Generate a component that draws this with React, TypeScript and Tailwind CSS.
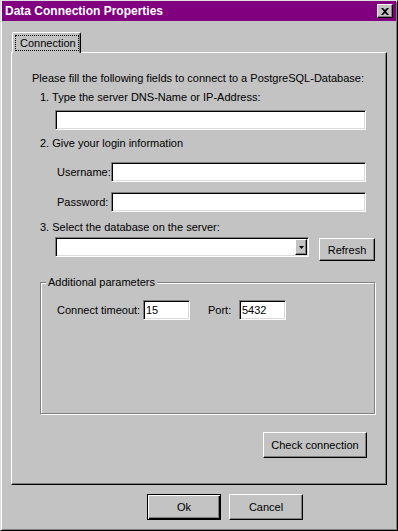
import React from 'react';

// Win9x style bevels
const raised = "bg-[#c3c3c3] border border-t-white border-l-white border-r-black border-b-black shadow-[inset_-1px_-1px_0_#808080]";
const sunken = "bg-white border border-t-[#808080] border-l-[#808080] border-r-white border-b-white shadow-[inset_1px_1px_0_#000,inset_-1px_-1px_0_#dcdcdc]";
const label = "text-[11px] leading-[14px] text-black whitespace-nowrap";

const Field: React.FC<{ className: string; value?: string }> = ({ className, value }) => (
  <div className={`${sunken} ${className} shrink-0 flex items-center pl-[2px] ${label}`}>{value}</div>
);

export default function App() {
  return (
    <div
      className="w-[398px] h-[531px] bg-[#c3c3c3] border border-t-[#dfdfdf] border-l-[#dfdfdf] border-r-black border-b-black shadow-[inset_1px_1px_0_#fff,inset_-1px_-1px_0_#808080] flex flex-col"
      style={{ fontFamily: '"Liberation Sans", Arial, sans-serif' }}
    >
      {/* Title bar */}
      <div className="mx-[1px] h-[20px] bg-[#800080] flex items-center justify-between pl-[3px] pr-[3px]">
        <span className="text-white font-bold text-[12px] leading-[14px]">Data Connection Properties</span>
        <div className={`${raised} w-[16px] h-[14px] flex items-center justify-center`}>
          <svg width="8" height="7" viewBox="0 0 8 7">
            <path d="M0 0h2l2 2 2-2h2L5 3.5 8 7H6L4 5 2 7H0l3-3.5z" fill="#000" />
          </svg>
        </div>
      </div>

      <div className="flex flex-col px-[10px] pt-[11px]">
        {/* Tab */}
        <div className="relative z-10 -mb-px ml-[1px] w-[69px] h-[21px] bg-[#c3c3c3] border border-b-0 border-t-white border-l-white border-r-black rounded-t-[2px] shadow-[inset_-1px_0_0_#808080] flex items-start pt-[2px] pl-[2px]">
          <span className={`${label} border border-dotted border-black pl-[4px] h-[16px] w-[64px] flex items-center`}>Connection</span>
        </div>

        {/* Tab panel */}
        <div className="w-[376px] h-[433px] border border-t-white border-l-white border-r-black border-b-black shadow-[inset_-1px_-1px_0_#808080] flex flex-col pl-[20px]">
          <p className={`${label} mt-[18px]`}>Please fill the following fields to connect to a PostgreSQL-Database:</p>
          <p className={`${label} mt-[5px] ml-[8px]`}>1. Type the server DNS-Name or IP-Address:</p>
          <Field className="mt-[6px] ml-[23px] w-[311px] h-[20px]" />
          <p className={`${label} mt-[6px] ml-[8px]`}>2. Give your login information</p>

          <div className="mt-[12px] ml-[25px] flex items-center">
            <span className={`${label} w-[54px] shrink-0`}>Username:</span>
            <Field className="w-[255px] h-[20px]" />
          </div>
          <div className="mt-[10px] ml-[25px] flex items-center">
            <span className={`${label} w-[54px] shrink-0`}>Password:</span>
            <Field className="w-[255px] h-[20px]" />
          </div>

          <p className={`${label} mt-[8px] ml-[8px]`}>3. Select the database on the server:</p>
          <div className="mt-[3px] ml-[23px] flex items-start">
            <div className={`${sunken} w-[254px] h-[20px] flex justify-end items-center pr-[1px]`}>
              <div className={`${raised} w-[12px] h-[16px] flex items-center justify-center`}>
                <svg width="5" height="3" viewBox="0 0 5 3">
                  <path d="M0 0h5L2.5 3z" fill="#000" />
                </svg>
              </div>
            </div>
            <button className={`${raised} ${label} ml-[10px] mt-[1px] w-[56px] h-[23px]`}>Refresh</button>
          </div>

          {/* Group box */}
          <fieldset className="mt-[14px] ml-[8px] w-[335px] h-[139px] border border-[#808080] shadow-[1px_1px_0_#fff,inset_1px_1px_0_#fff]">
            <legend className={`${label} ml-[5px] px-[2px] bg-[#c3c3c3]`}>Additional parameters</legend>
            <div className="mt-[11px] ml-[16px] flex items-center">
              <span className={`${label} w-[86px] shrink-0`}>Connect timeout:</span>
              <Field className="w-[47px] h-[20px]" value="15" />
              <span className={`${label} ml-[18px] w-[31px] shrink-0`}>Port:</span>
              <Field className="w-[47px] h-[20px]" value="5432" />
            </div>
          </fieldset>

          <button className={`${raised} ${label} mt-[18px] ml-[231px] w-[104px] h-[26px]`}>Check connection</button>
        </div>

        {/* Dialog buttons */}
        <div className="mt-[9px] ml-[136px] flex gap-[8px]">
          <button className={`${label} w-[74px] h-[26px] border border-black bg-[#c3c3c3] shadow-[inset_1px_1px_0_#fff,inset_-1px_-1px_0_#000,inset_-2px_-2px_0_#808080]`}>Ok</button>
          <button className={`${raised} ${label} w-[74px] h-[26px]`}>Cancel</button>
        </div>
      </div>
    </div>
  );
}
